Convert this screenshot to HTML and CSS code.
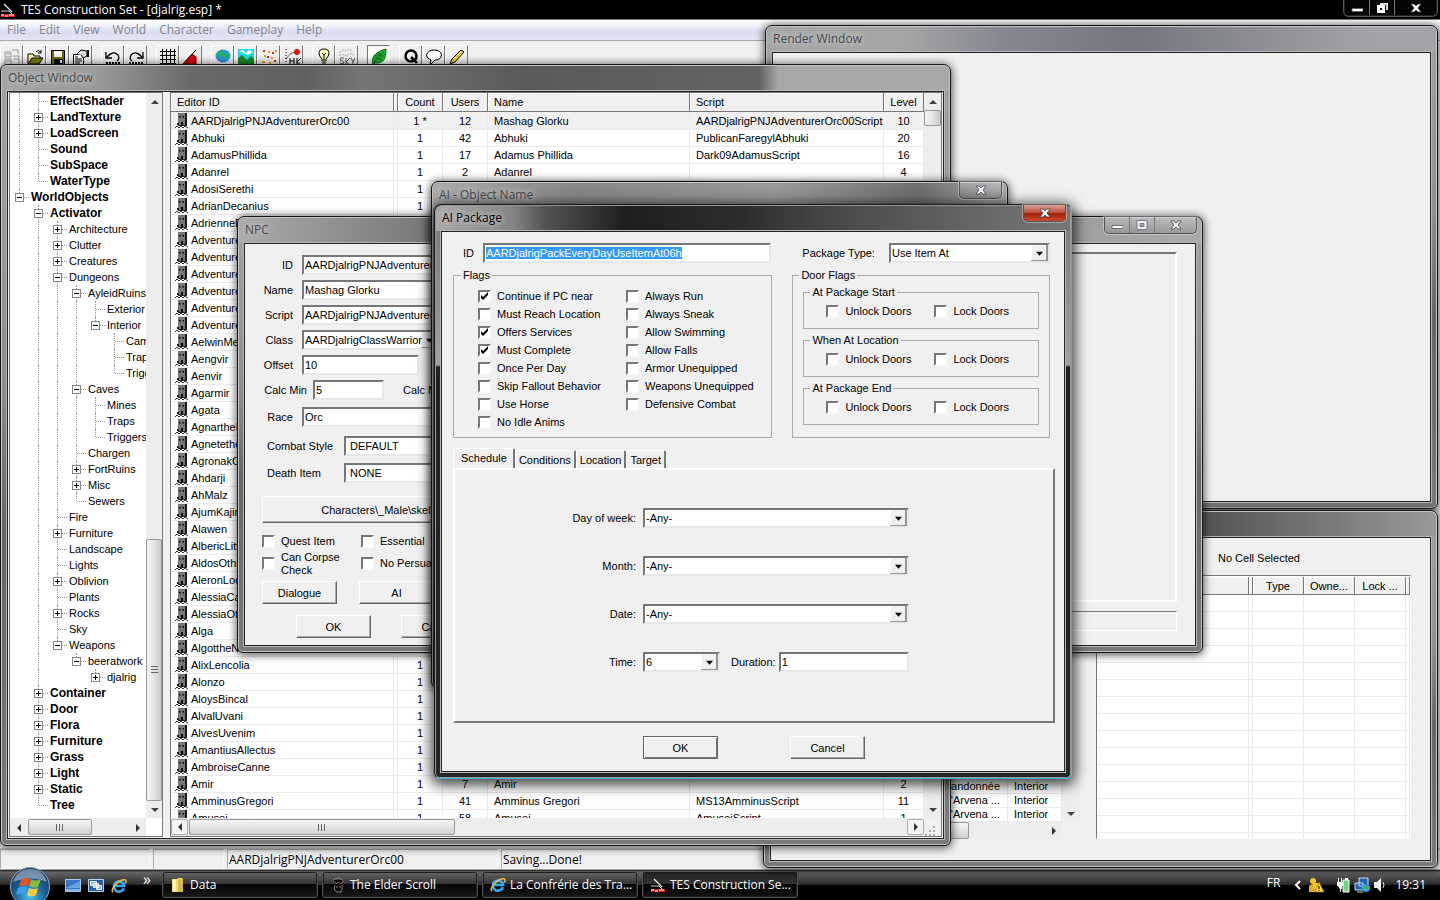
FILE: index.html
```html
<!DOCTYPE html>
<html lang="en">
<head>
<meta charset="utf-8">
<title>TES Construction Set</title>
<link rel="stylesheet" href="styles.css">
</head>
<body>
<svg class="defs" aria-hidden="true">
  <symbol id="npc" viewBox="0 0 14 16"><path d="M3 0h8v12H3z" fill="#767676"/><path d="M10 0h2v13h-2zM2 10h2v2H2z" fill="#1c1c1c"/><path d="M4 3h1.500v1.500H4zM7.500 3H9v1.500H7.500zM6 9h2v3H6z" fill="#000"/><path d="M3 12h9v1H3z" fill="#222"/><path d="M0 15l2-2 2 2 2-2 2 2 2-2 3 2" fill="none" stroke="#333"/></symbol>
  <symbol id="compass" viewBox="0 0 16 16"><path d="M1 9h8l5 5" fill="none" stroke="#ccc"/><path d="M4 2l8 8" stroke="#ddd" stroke-width="1.4"/><path d="M1 12h14v3H1z" fill="#d22"/><path d="M1 13h3M5 14h3M9 13h5" stroke="#fff"/></symbol>
  <symbol id="ie" viewBox="0 0 18 18"><path d="M14.500 11.500A5.800 5.800 0 1 1 14.800 9H5" fill="none" stroke="#38a5ee" stroke-width="3"/><path d="M2 16C-1 12 9 2 15 2c3 0 2 3 1 4" fill="none" stroke="#f5c234" stroke-width="1.6"/></symbol>
  <symbol id="x" viewBox="0 0 12 10"><path d="M1 1h3l2 2 2-2h3L8 5l3 4H8L6 7 4 9H1l3-4z" fill="#fff" stroke="#445" stroke-width=".8"/></symbol>
  <symbol id="min" viewBox="0 0 12 10"><path d="M1 5.500h11v3H1z" fill="#fff" stroke="#556" stroke-width=".8"/></symbol>
  <symbol id="max" viewBox="0 0 12 10"><path d="M1 .5h10v9H1zM4 3.500h4v3H4z" fill="#eee" fill-rule="evenodd" stroke="#667" stroke-width=".8"/></symbol>
  <symbol id="restore" viewBox="0 0 12 10"><path d="M4 0h8v7h-2V2H4z" fill="#ddd"/><path d="M1 2h8v8H1zM4 5v2h2V5z" fill="#fff" fill-rule="evenodd"/></symbol>
</svg>
<main class="app">
  <header class="app-title">
    <svg class="i16"><use href="#compass"/></svg><h1>TES Construction Set - [djalrig.esp] *</h1>
    <div class="caption dark"><button aria-label="Minimize"><svg><use href="#min"/></svg></button><button aria-label="Restore"><svg><use href="#restore"/></svg></button><button class="close" aria-label="Close"><svg><use href="#x"/></svg></button></div>
  </header>
  <nav class="menu"><button>File</button><button>Edit</button><button>View</button><button>World</button><button>Character</button><button>Gameplay</button><button>Help</button></nav>
  <div class="toolbar">
    <div class="group">
      <button aria-label="Version control"><svg viewBox="0 0 18 18"><path d="M2 4h6v5H2zM9 2h6v4M2 11h6v6H2zM10 8h6v8M3 6h4M3 13h4M11 11h4" fill="none" stroke="#999"/></svg></button>
      <button aria-label="Open"><svg viewBox="0 0 18 18"><path d="M2 16V6h5l1 2h6v2" fill="#ffffa0" stroke="#000"/><path d="M2 16l4-6h11l-4 6z" fill="#808000" stroke="#000"/><path d="M10 4q3-3 5 1M15 2v3h-3" fill="none" stroke="#000"/></svg></button>
      <button aria-label="Save"><svg viewBox="0 0 18 18"><path d="M2.500 2.500h13v14h-13z" fill="#707000" stroke="#000"/><path d="M5 3h8v6H5z" fill="#f0f0f0"/><path d="M5 11h9v5H5z" fill="#000"/><path d="M11 12h2v3h-2z" fill="#fff"/></svg></button>
      <button aria-label="Preferences"><svg viewBox="0 0 18 18"><path d="M1.500 6.500h10v10h-10z" fill="#fff" stroke="#000"/><path d="M3 9h3M3 11h7M3 13h7M3 15h5" stroke="#000"/><path d="M5 6l4-4 6 1v5l-4 2-2-3" fill="#ddd" stroke="#000"/><path d="M15 2h2v7h-2z"/></svg></button>
    </div>
    <div class="group">
      <button aria-label="Undo"><svg viewBox="0 0 18 18"><path d="M2 4v6h6M3 9q6-7 11-2 2 4-1 6" fill="none" stroke="#000" stroke-width="1.300"/><path d="M2 15h14" stroke="#000" stroke-width="2" stroke-dasharray="2 1"/></svg></button>
      <button aria-label="Redo"><svg viewBox="0 0 18 18"><path d="M16 4v6h-6M15 9Q9 2 4 7q-2 4 1 6" fill="none" stroke="#000" stroke-width="1.300"/><path d="M2 15h14" stroke="#000" stroke-width="2" stroke-dasharray="2 1"/></svg></button>
    </div>
    <div class="group">
      <button aria-label="Snap to grid"><svg viewBox="0 0 18 18"><path d="M3.500 1v16M7.500 1v16M11.500 1v16M15.500 1v16M1 3.500h16M1 7.500h16M1 11.500h16M1 15.500h16" stroke="#000"/></svg></button>
      <button aria-label="Snap to angle"><svg viewBox="0 0 18 18"><path d="M1 16L14 2" stroke="#000"/><path d="M1 16h13V9l-4-3z" fill="#e00000" stroke="#500"/></svg></button>
    </div>
    <div class="group">
      <button aria-label="World"><svg viewBox="0 0 18 18"><ellipse cx="9" cy="8" rx="7.500" ry="6.500" fill="#2794e8"/><path d="M3 6q3-5 6-3l-1 4-3 3zM10 6l4-2 1 5-4 4z" fill="#22b84c"/></svg></button>
      <button aria-label="Landscape"><svg viewBox="0 0 18 18"><path d="M1 1h16v16H1z" fill="#20d7e8"/><path d="M2 3l4-1 3 3 3-3 4 2-5 3z" fill="#fff"/><path d="M1 10l4-3 5 5 4-4 3 3v6H1z" fill="#168a24"/></svg></button>
      <button aria-label="Path grid"><svg viewBox="0 0 18 18"><path d="M3 2h2v2H3zM12 4h2v2h-2zM7 8h2v2H7zM14 12h2v2h-2z" fill="#e02020"/><path d="M8 3h2v2H8zM4 7h2v2H4zM11 9h2v2h-2zM2 13h3v2H2zM9 14h2v2H9zM15 2h2v2h-2z" fill="#e8a010"/></svg></button>
      <button aria-label="Havok"><svg viewBox="0 0 18 18"><path d="M3 1v15" stroke="#000" stroke-dasharray="1 2"/><path d="M3 11q4-6 9-7" fill="none" stroke="#000" stroke-dasharray="2 1"/><circle cx="14" cy="4" r="3" fill="#e01010"/><path d="M7 10v7M11 10v7M7 13h4M14 10v7M18 10l-4 4 4 3" fill="none" stroke="#000"/></svg></button>
    </div>
    <div class="group">
      <button aria-label="Light"><svg viewBox="0 0 18 18"><path d="M9 1q5 0 5 4 0 3-3 6v2H7v-2Q4 8 4 5q0-4 5-4z" fill="#ffffa8" stroke="#000"/><path d="M7 5l2 2 2-2M9 7v5M7 15h4M8 17h2" fill="none" stroke="#000"/></svg></button>
      <button aria-label="Sky"><svg viewBox="0 0 18 18"><path d="M2 5q3-5 6-2 4-3 6 1M1 8q4-3 7 0 4-4 8-1" fill="none" stroke="#999" stroke-dasharray="2 1"/><path d="M6 10q-4-1-4 2 4 1 4 3-2 2-4 0M8 10v7M12 10l-4 4 4 3M13 10l2 4 2-4M15 14v3" fill="none" stroke="#555"/></svg></button>
    </div>
    <div class="group">
      <button class="pressed" aria-label="Leaves"><svg viewBox="0 0 18 18"><path d="M3 16C0 7 9 3 16 1c0 9-2 15-11 14z" fill="#20b030" stroke="#087018"/><path d="M2 17Q7 9 14 4M6 11V7M9 8V5M7 11h5M10 8h4" fill="none" stroke="#086018"/></svg></button>
    </div>
    <div class="group">
      <button aria-label="Quest"><svg viewBox="0 0 18 18"><circle cx="9" cy="8" r="5.500" fill="none" stroke="#000" stroke-width="2.500"/><path d="M9 9l6 6" stroke="#000" stroke-width="2.500"/></svg></button>
      <button aria-label="Dialogue"><svg viewBox="0 0 18 18"><path d="M6 12Q1 10 1.500 7 3 2 9 2q7 0 7.500 5Q16 12 10 12l-5 5z" fill="#fff" stroke="#000"/></svg></button>
      <button aria-label="Edit script"><svg viewBox="0 0 18 18"><path d="M2 16l2-5 9-9 3 2-9 10z" fill="#f0d030" stroke="#000"/></svg></button>
    </div>
  </div>
  <div class="workspace"></div>
  <footer class="status"><span></span><span></span><span>AARDjalrigPNJAdventurerOrc00</span><span>Saving...Done!</span></footer>
  <nav class="taskbar">
    <button class="start" aria-label="Start"><svg viewBox="0 0 42 34"><defs><radialGradient id="orb" cx=".5" cy=".75" r=".8"><stop offset="0" stop-color="#45c3ee"/><stop offset=".5" stop-color="#1a5d96"/><stop offset="1" stop-color="#102e50"/></radialGradient></defs><circle cx="21" cy="21" r="19.500" fill="url(#orb)" stroke="#8eaabb"/><path d="M4 16Q8 3 21 3q13 0 17 13Q22 9 4 16" fill="#fff" opacity=".4"/><path d="M12 14q4-4 9-1l-2 7q-4-2-9 1z" fill="#ec5322"/><path d="M22 13q5 3 10 0l-3 8q-4 2-9-1z" fill="#84bf3b"/><path d="M9 22q5-3 9-1l-2 8q-4-3-9 0z" fill="#36a1e4"/><path d="M20 22q5 2 9 0l-2 7q-5 3-9 0z" fill="#fccb33"/></svg></button>
    <div class="quick">
      <button aria-label="Show desktop"><svg class="i16" viewBox="0 0 16 16"><path d="M.5 1.500h15v12H.5z" fill="#3978c8" stroke="#a8c8ec"/><path d="M1 10L15 3v7z" fill="#6aa4e0"/><path d="M1 12h14" stroke="#d7eaff"/></svg></button>
      <button aria-label="Switch windows"><svg class="i16" viewBox="0 0 16 16"><path d="M.5 1.500h15v12H.5z" fill="#235fae" stroke="#b3d2f0"/><path d="M2.500 3.500h6v4h-6zM5.500 5.500h5v4h-5zM8.500 7.500h5v4h-5z" fill="#8cbce8" stroke="#fff"/></svg></button>
      <button aria-label="Internet Explorer"><svg class="i16"><use href="#ie"/></svg></button>
    </div>
    <span class="more">»</span>
    <div class="tasks">
      <button><svg class="i16" viewBox="0 0 16 16"><path d="M2 2h5l1-1h5v14H2z" fill="#f2da7b"/><path d="M8 3l5-2v14H8z" fill="#d8b74b"/><path d="M3 3h3v11H3z" fill="#fff3b8"/></svg>Data</button>
      <button><svg class="i16" viewBox="0 0 16 16"><path d="M4 3h8v4H4z" fill="#000"/><path d="M3 3q5-4 10 0M4 4l2 3 2-2 3 2 2-3M5 8q-2 5 2 7h4q2-3 1-7M7 9v2M10 9v2" fill="none" stroke="#b09090" stroke-width=".8"/></svg>The Elder Scroll</button>
      <button><svg class="i16"><use href="#ie"/></svg>La Confrérie des Tra...</button>
      <button class="active"><svg class="i16"><use href="#compass"/></svg>TES Construction Se...</button>
    </div>
    <div class="tray">
      <span class="lang">FR</span>
      <svg class="chev" viewBox="0 0 8 10"><path d="M6 1L2 5l4 4" fill="none" stroke="#fff" stroke-width="2"/></svg>
      <svg class="i16" viewBox="0 0 16 16"><circle cx="5" cy="4" r="3" fill="#f6c528"/><path d="M1 15V9q4-4 8 0v6z" fill="#e9aa12"/><path d="M5 6h5v6H5z" fill="#f6c528"/><path d="M11 5l5 10H7z" fill="#ffd94c" stroke="#9b6a00" stroke-width=".6"/><path d="M11 9v3M11 13v1" stroke="#000"/></svg>
      <svg class="i16 power" viewBox="0 0 16 16"><path d="M7 3h6v12H7z" fill="#68d978" stroke="#fff"/><path d="M9 1h3v2H9zM1 5h6v4H6v3H5v3H4v-3L2 9H1zM2 1h1v4H2zM5 1h1v4H5z" fill="#fff"/></svg>
      <svg class="i16" viewBox="0 0 16 16"><path d="M5 1h9v8H5zM1 6h8v7H1z" fill="#1d65b7" stroke="#cbe5ff"/><path d="M3 15h6" stroke="#ccc"/><circle cx="12" cy="11" r="4" fill="#249cdf"/><path d="M9 10l3-2 1 4-2 2zM14 9l2 2-1 2z" fill="#3cc44c"/></svg>
      <svg class="i16" viewBox="0 0 16 16"><path d="M2 5h3l4-4v14l-4-4H2z" fill="#f0f0f0"/><path d="M11 5q2 3 0 6" fill="none" stroke="#ddd"/></svg>
      <time>19:31</time>
    </div>
  </nav>

  <section class="window render"><div class="bar"><h2>Render Window</h2></div><div class="client"></div></section>

  <section class="window cell"><div class="bar"></div>
    <div class="client">
      <div class="cells">
        <table class="grid"><colgroup><col><col class="c-type"></colgroup><tbody><tr><td>Cabane abandonnée</td><td>Interior</td></tr><tr><td>Maison d'Arvena ...</td><td>Interior</td></tr><tr><td>Cave d'Arvena ...</td><td>Interior</td></tr></tbody></table>
        <div class="vscroll"><i class="arrow up"></i><i class="track"></i><i class="arrow down"></i></div>
        <div class="hscroll"><i class="arrow left"></i><i class="thumb"></i><i class="track"></i><i class="arrow right"></i></div>
      </div>
      <div class="refs"><p>No Cell Selected</p><div class="sunk"><table class="grid" id="refs"><colgroup><col><col class="c-gap"><col class="c-ref"><col class="c-ref"><col class="c-ref"><col class="c-gap"></colgroup><thead><tr><th></th><th></th><th>Type</th><th>Owne...</th><th>Lock ...</th><th></th></tr></thead><tbody></tbody></table></div></div>
    </div>
  </section>

  <section class="window object"><div class="bar"><h2>Object Window</h2></div>
    <div class="client">
      <div class="treepane"><div class="tree" id="tree"></div>
        <div class="vscroll"><i class="arrow up"></i><i class="track"></i><i class="thumb"></i><i class="arrow down"></i></div>
        <div class="hscroll"><i class="arrow left"></i><i class="thumb"></i><i class="track"></i><i class="arrow right"></i></div>
      </div>
      <div class="listpane"><div class="list"><table class="grid" id="npcs"><colgroup><col class="c-id"><col class="c-gap"><col class="c-num"><col class="c-num"><col class="c-name"><col><col class="c-level"></colgroup><thead><tr><th>Editor ID</th><th></th><th>Count</th><th>Users</th><th>Name</th><th>Script</th><th>Level</th></tr></thead><tbody></tbody></table></div>
        <div class="vscroll"><i class="arrow up"></i><i class="thumb"></i><i class="track"></i><i class="arrow down"></i></div>
        <div class="hscroll"><i class="arrow left boxed"></i><i class="thumb"></i><i class="track"></i><i class="arrow right boxed"></i></div>
        <svg class="grip" viewBox="0 0 12 12"><path d="M10 2v2M10 6v2M10 10v2M6 6v2M6 10v2M2 10v2" stroke="#aaa" stroke-width="2"/></svg>
      </div>
    </div>
  </section>

  <section class="window npc"><div class="bar"><h2>NPC</h2><div class="caption"><button aria-label="Minimize"><svg><use href="#min"/></svg></button><button aria-label="Maximize"><svg><use href="#max"/></svg></button><button class="close" aria-label="Close"><svg><use href="#x"/></svg></button></div></div>
    <div class="client">
      <form class="npcform">
        <div class="row"><label for="n1">ID</label><input id="n1" value="AARDjalrigPNJAdventurerOrc00"></div>
        <div class="row"><label for="n2">Name</label><input id="n2" value="Mashag Glorku"></div>
        <div class="row"><label for="n3">Script</label><input id="n3" value="AARDjalrigPNJAdventurerOrc00Script"></div>
        <div class="row"><label for="n4">Class</label><select id="n4" class="class"><option>AARDjalrigClassWarrior</option></select></div>
        <div class="row"><label for="n5">Offset</label><input id="n5" class="offset" value="10"></div>
        <div class="row calc"><label for="n6">Calc Min</label><input id="n6" value="5"><label for="n7">Calc Max</label><input id="n7" value="0"></div>
        <div class="row race"><label for="n8">Race</label><select id="n8"><option>Orc</option></select></div>
        <div class="row wide"><label for="n9">Combat Style</label><select id="n9"><option>DEFAULT</option></select></div>
        <div class="row wide"><label for="n10">Death Item</label><select id="n10"><option>NONE</option></select></div>
        <button type="button" class="btn skeleton">Characters\_Male\skeleton.nif</button>
        <div class="checks"><label><input type="checkbox">Quest Item</label><label><input type="checkbox">Essential</label><label class="two"><input type="checkbox">Can Corpse Check</label><label><input type="checkbox">No Persuasion</label></div>
        <div class="btns"><button type="button" class="btn">Dialogue</button><button type="button" class="btn">AI</button></div>
        <div class="btns end"><button type="button" class="btn">OK</button><button type="button" class="btn">Cancel</button></div>
      </form>
      <div class="preview"><div class="panel"></div><div class="strip"></div></div>
    </div>
  </section>

  <section class="window ai"><div class="bar"><h2>AI - Object Name</h2><div class="caption"><button class="close" aria-label="Close"><svg><use href="#x"/></svg></button></div></div><div class="client"></div></section>

  <section class="window package"><div class="bar"><h2>AI Package</h2><div class="caption red"><button class="close" aria-label="Close"><svg><use href="#x"/></svg></button></div></div>
    <form class="client">
      <div class="pair head">
        <div class="field"><label for="pid">ID</label><input id="pid" value="AARDjalrigPackEveryDayUseItemAt06h"></div>
        <div class="field type"><label for="ptype">Package Type:</label><select id="ptype"><option>Use Item At</option></select></div>
      </div>
      <div class="pair">
        <fieldset class="flags"><legend>Flags</legend>
          <label><input type="checkbox" checked>Continue if PC near</label><label><input type="checkbox">Must Reach Location</label><label><input type="checkbox" checked>Offers Services</label><label><input type="checkbox" checked>Must Complete</label><label><input type="checkbox">Once Per Day</label><label><input type="checkbox">Skip Fallout Behavior</label><label><input type="checkbox">Use Horse</label><label><input type="checkbox">No Idle Anims</label>
          <label><input type="checkbox">Always Run</label><label><input type="checkbox">Always Sneak</label><label><input type="checkbox">Allow Swimming</label><label><input type="checkbox">Allow Falls</label><label><input type="checkbox">Armor Unequipped</label><label><input type="checkbox">Weapons Unequipped</label><label><input type="checkbox">Defensive Combat</label>
        </fieldset>
        <fieldset class="doors"><legend>Door Flags</legend>
          <fieldset><legend>At Package Start</legend><label><input type="checkbox">Unlock Doors</label><label><input type="checkbox">Lock Doors</label></fieldset>
          <fieldset><legend>When At Location</legend><label><input type="checkbox">Unlock Doors</label><label><input type="checkbox">Lock Doors</label></fieldset>
          <fieldset><legend>At Package End</legend><label><input type="checkbox">Unlock Doors</label><label><input type="checkbox">Lock Doors</label></fieldset>
        </fieldset>
      </div>
      <div class="tabs" role="tablist"><button type="button" role="tab" aria-selected="true">Schedule</button><button type="button" role="tab">Conditions</button><button type="button" role="tab">Location</button><button type="button" role="tab">Target</button></div>
      <div class="tabpanel">
        <div class="sched"><label for="s1">Day of week:</label><select id="s1"><option>-Any-</option></select></div>
        <div class="sched"><label for="s2">Month:</label><select id="s2"><option>-Any-</option></select></div>
        <div class="sched"><label for="s3">Date:</label><select id="s3"><option>-Any-</option></select></div>
        <div class="sched"><label for="s4">Time:</label><span class="time"><select id="s4"><option>6</option></select><label for="s5">Duration:</label><input id="s5" value="1"></span></div>
      </div>
      <div class="actions"><button type="button" class="btn default">OK</button><button type="button" class="btn">Cancel</button></div>
    </form>
  </section>
</main>
<script src="app.js"></script>
</body>
</html>
```
FILE: styles.css
```css
* { box-sizing: border-box; }
body { margin: 0; font: 11px/14px "Liberation Sans", Arial, sans-serif; color: #000; }
button, input, select { font: inherit; color: inherit; margin: 0; }
button { padding: 0; border: 0; background: none; }
h1, h2, p { margin: 0; font-weight: normal; }
.defs { position: absolute; width: 0; height: 0; }
.i16 { width: 16px; height: 16px; flex: none; }

.app { position: relative; display: flex; flex-direction: column; height: 100vh; overflow: hidden; background: #f0f0f0; }
.app-title, .menu, .status, .taskbar, .bar { font-family: "Open Sans", "Noto Sans", sans-serif; font-size: 12px; }
.app-title { display: flex; align-items: center; gap: 5px; height: 20px; flex: none; background: #000; color: #fff; border-bottom: 1px solid #777; }
.app-title h1 { font-size: 12px; flex: 1; }

.caption { display: flex; align-self: flex-start; height: 17px; border: 1px solid #555; border-top: 0; border-radius: 0 0 5px 5px; box-shadow: 0 0 0 1px rgba(255,255,255,.35); overflow: hidden; }
.caption button { display: grid; place-items: center; width: 25px; border-right: 1px solid #777; background: linear-gradient(rgba(255,255,255,.25), rgba(0,0,0,.08)); }
.caption button.close { width: 41px; border-right: 0; }
.caption svg { width: 12px; height: 10px; }
.caption.dark { margin-right: 3px; height: 16px; border-color: #222; }
.caption.dark button { background: #050505; }
.caption.red button { background: linear-gradient(#dca195, #bb4a36 50%, #9c1c07 50%, #cf4b2a); }

.menu { display: flex; gap: 13px; align-items: center; flex: none; height: 21px; padding-left: 7px; background: linear-gradient(#fff, #eceefb 35%, #dadcf0 60%, #e4e6f6); border-bottom: 1px solid #aaa; color: #85858d; }
.toolbar { display: flex; flex: none; gap: 9px; height: 30px; padding-top: 4px; }
.group { display: flex; }
.toolbar button { width: 23px; height: 24px; display: grid; place-items: center; border: 1px solid; border-color: #fff #777 #777 #fff; }
.toolbar button.pressed { border-color: #777 #fff #fff #777; background: #fafafa; }
.toolbar svg { width: 18px; height: 18px; }
.workspace { flex: 1; background: #f0f0f0; }
.status { display: flex; flex: none; gap: 3px; height: 21px; line-height: 19px; border-top: 1px solid #ccc; }
.status span { border: 1px solid; border-color: #aaa #f8f8f8 #f8f8f8 #aaa; padding-left: 1px; white-space: nowrap; }
.status span:nth-child(1) { width: 150px; }
.status span:nth-child(2) { width: 71px; }
.status span:nth-child(3) { width: 271px; }
.status span:nth-child(4) { flex: 1; }

.taskbar { display: flex; flex: none; align-items: center; height: 31px; color: #fff; background: linear-gradient(#999 0 1px, #333 1px 2px, #666 3px, #2a2a2a 50%, #000 52%); }
.start { width: 42px; height: 34px; margin-left: 9px; align-self: flex-end; z-index: 1; }
.start svg { display: block; width: 42px; height: 34px; }
.quick { display: flex; gap: 7px; margin-left: 14px; padding-top: 2px; }
.quick button, .quick svg { display: block; }
.more { width: 19px; margin-left: 16px; font-size: 16px; padding-bottom: 12px; }
.tasks { display: flex; gap: 4px; flex: 1; }
.tasks button { display: flex; align-items: center; gap: 4px; width: 156px; height: 27px; padding-left: 7px; border: 1px solid #555; border-radius: 3px; box-shadow: inset 0 0 0 1px #1d1d1d; background: linear-gradient(#666, #333 48%, #050505 50%, #181818); white-space: nowrap; }
.tasks button.active { background: linear-gradient(#222, #333 48%, #050505 50%, #111); }
.tray { display: flex; align-items: center; gap: 2px; padding-right: 14px; }
.tray .lang { margin-right: 12px; padding-bottom: 4px; }
.tray .chev { width: 8px; height: 10px; margin-right: 4px; }
.tray .power { margin-left: 10px; }
.tray time { margin-left: 5px; }

.window { position: absolute; display: flex; flex-direction: column; padding: 0 6px 6px; border: 1px solid #161616; border-radius: 7px 7px 6px 6px; box-shadow: inset 0 0 0 1px #c4c4c4, 0 1px 9px 1px rgba(0,0,0,.65); background: linear-gradient(#a2a2a2, #8e8e8e 40%, #666 60%, #7a7a7a); }
.bar { display: flex; flex: none; justify-content: space-between; height: 25px; margin: 1px -5px 0; padding: 0 4px 0 6px; border-radius: 6px 6px 0 0; color: #45484c; }
.bar h2 { font-size: 12px; line-height: 23px; text-shadow: 0 0 6px #ccc, 0 0 6px #ccc; }
.bar .caption { margin-top: -1px; }
.client { flex: 1; min-height: 0; background: #f0f0f0; border: 1px solid #222; outline: 1px solid #b8b8b8; }

.render { left: 765px; right: 2px; top: 25px; height: 484px; }
.render .bar { background: linear-gradient(90deg, #a6a6a6 20%, #858890 35%, #74777e 55%, #a2a3a6 90%); }
.cell { left: 763px; right: 2px; top: 510px; height: 358px; }
.cell .bar { background: linear-gradient(90deg, #777 50%, #555 66%, #999); }
.object { left: 0; top: 64px; width: 951px; height: 782px; }
.object .bar { background: linear-gradient(90deg, #a4a4a4, #9a9a9a 10%, #696969 20%, #606060 32%, #757575 38%, #5a5a5a 55%, #636363 80%, #a8a8a8 82%); }
.npc { left: 237px; top: 216px; width: 966px; height: 437px; }
.npc .bar { background: linear-gradient(90deg, #aaa, #777 20%, #999 80%, #aaa); }
.ai { left: 431px; top: 181px; width: 577px; height: 507px; background: linear-gradient(#999, #666 60%, #222); }
.ai .bar { background: linear-gradient(90deg, #aaa, #868686 25%, #999 60%, #6e6e6e 85%, #a8a8a8); }
.package { left: 434px; top: 204px; width: 638px; height: 575px; border-right-color: #3eb4d6; border-bottom-color: #3eb4d6; box-shadow: inset 0 0 0 1px #999, 0 3px 14px 3px rgba(0,0,0,.75); background: linear-gradient(#777 0, #a0a0a0 160px, #222 162px, #252525); }
.package .bar { color: #000; background: linear-gradient(90deg, #aaa, #858585 12%, #555 17%, #1e1e1e 30%, #2c2c2c 48%, #444 60%, #666 85%, #777); }

/* scroll bars */
.vscroll, .hscroll { display: flex; background: #ededed; }
.vscroll { flex-direction: column; }
.arrow { display: grid; place-items: center; width: 17px; height: 17px; flex: none; }
.arrow::before { content: ""; border: 4px solid transparent; }
.up::before { border-top: 0; border-bottom-color: #444; }
.down::before { border-bottom: 0; border-top-color: #444; }
.left::before { border-left: 0; border-right-color: #333; }
.right::before { border-right: 0; border-left-color: #333; }
.boxed { border: 1px solid #aaa; border-radius: 2px; height: 16px; background: #f4f4f4; }
.track { flex: 1; }
.thumb { position: relative; display: grid; place-items: center; border: 1px solid #999; border-radius: 2px; background: linear-gradient(#f5f5f5, #e6e6e6 45%, #d0d0d0); }
.vscroll .thumb { background: linear-gradient(90deg, #f5f5f5, #e6e6e6 45%, #c9c9cf); }
.hscroll .thumb::before { content: ""; width: 8px; height: 7px; background: repeating-linear-gradient(90deg, #666 0 1px, transparent 1px 3px); }

/* tables */
.grid { border-collapse: separate; border-spacing: 0; table-layout: fixed; width: 100%; background: #fff; }
.grid th { height: 18px; padding: 0 6px; font-weight: normal; text-align: center; background: #f0f0f0; border-right: 1px solid #777; border-bottom: 1px solid #777; box-shadow: inset 1px 1px #fff; white-space: nowrap; overflow: hidden; }
.grid td { height: 17px; padding: 0 0 0 6px; border-right: 1px solid #ebebeb; border-bottom: 1px solid #ebebeb; white-space: nowrap; overflow: hidden; line-height: 16px; }
.c-gap { width: 4px; }
.grid .gap { padding: 0; }

/* object window */
.object .client { display: flex; gap: 7px; padding: 0 1px 1px; }
.treepane { display: grid; grid-template: minmax(0, 1fr) 18px / minmax(0, 1fr) 16px; width: 154px; border: 1px solid #777; background: #fff; }
.treepane > .vscroll { grid-row: 1; grid-column: 2; }
.treepane .vscroll .thumb { height: 262px; }
.treepane .vscroll .thumb::before { content: ""; width: 7px; height: 8px; background: repeating-linear-gradient(#666 0 1px, transparent 1px 3px); }
.treepane .hscroll, .listpane .hscroll { padding: 1px 0; }
.treepane .hscroll .thumb { width: 64px; }
.treepane .hscroll .left { margin-right: 1px; }
.tree { overflow: hidden; }
.node { display: flex; height: 16px; line-height: 16px; white-space: nowrap; }
.node b { font-size: 12px; }
.node > :last-child { padding-left: 2px; }
.node i { position: relative; flex: none; width: 19px; }
.node i.v::before { content: ""; position: absolute; left: 9px; top: 0; bottom: 0; border-left: 1px dotted #999; }
.node i.end::before { content: ""; position: absolute; left: 9px; top: 0; height: 8px; border-left: 1px dotted #999; }
.node i.h::after { content: ""; position: absolute; left: 10px; right: 0; top: 8px; border-top: 1px dotted #999; }
.node .box { position: absolute; z-index: 1; left: 5px; top: 4px; width: 9px; height: 9px; border: 1px solid #888; background: linear-gradient(#000, #000) center / 5px 1px no-repeat #fff; }
.node .plus { background: linear-gradient(#000, #000) center / 5px 1px no-repeat, linear-gradient(#000, #000) center / 1px 5px no-repeat #fff; }
.listpane { flex: 1; min-width: 0; display: grid; grid-template: minmax(0, 1fr) 18px / minmax(0, 1fr) 17px; border: 1px solid #777; }
.list { overflow: hidden; background: #fff; }
.listpane .vscroll .thumb { height: 16px; }
.listpane .hscroll .thumb { width: 266px; margin-left: 1px; }
.grip { width: 12px; height: 12px; align-self: end; }
.c-id { width: 223px; }
.c-num { width: 45px; }
.c-name { width: 202px; }
.c-level { width: 40px; }
#npcs th { height: 19px; }
#npcs th:nth-child(1), #npcs th:nth-child(5), #npcs th:nth-child(6) { text-align: left; }
#npcs td:nth-child(3), #npcs td:nth-child(4), #npcs td:nth-child(7) { text-align: center; padding: 0; }
#npcs tr:first-child td { background: #f0f0f0; }
#npcs tbody tr:first-child td { height: 18px; }
#npcs td:first-child { padding-left: 4px; }
#npcs td svg { width: 14px; height: 16px; margin-right: 2px; vertical-align: top; }

/* cell view */
.cell .client { display: flex; gap: 16px; padding: 4px 19px 21px 10px; }
.cells { display: grid; grid-template: minmax(0, 1fr) 17px / minmax(0, 1fr) 18px; width: 299px; align-items: end; }
.cells .vscroll { align-self: stretch; }
.cells .grid td { height: 14px; line-height: 13px; }
.cells td:first-child { text-align: right; padding-right: 7px; }
.c-type { width: 54px; }
.cells .hscroll .thumb { width: 171px; }
.refs { flex: 1; display: flex; flex-direction: column; }
.refs p { padding: 9px 0 10px 122px; }
.sunk { flex: 1; overflow: hidden; border: 1px solid; border-color: #777 #fff #fff #777; background: #fff; padding-top: 1px; }
.c-ref { width: 51px; }
#refs th { padding: 0; }

/* form controls */
input:not([type=checkbox]), select { height: 20px; min-width: 0; padding: 0 1px; background: #fff; border: 2px solid; border-color: #777 #e8e8e8 #e8e8e8 #777; border-radius: 0; outline: 0; }
select { appearance: none; background: #fff url("data:image/svg+xml,%3Csvg xmlns='http://www.w3.org/2000/svg' width='17' height='17'%3E%3Cpath d='M0 0h17v17H0z' fill='%23f0f0f0'/%3E%3Cpath d='M.5 16V.5H16' fill='none' stroke='%23fff'/%3E%3Cpath d='M0 16h16V0' fill='none' stroke='%23777' stroke-width='1.500'/%3E%3Cpath d='M5 7h7l-3.500 4z'/%3E%3C/svg%3E") right center no-repeat; }
input[type=checkbox] { appearance: none; flex: none; width: 13px; height: 13px; border: 2px solid; border-color: #777 #fafafa #fafafa #777; background: #fff; }
input[type=checkbox]:checked { background: #fff url("data:image/svg+xml,%3Csvg xmlns='http://www.w3.org/2000/svg' width='9' height='9'%3E%3Cpath d='M1 3v3l2 2 5-5V0L3 5z'/%3E%3C/svg%3E") center no-repeat; }
::selection { background: #3399ff; color: #fff; }
.btn { height: 23px; width: 75px; border: 1px solid; border-color: #fff #666 #666 #fff; box-shadow: inset -1px -1px #aaa; background: #f0f0f0; }
.btn.default { border-color: #666; box-shadow: inset 1px 1px #fff, inset -1px -1px #777; }

/* NPC window */
.npc .client { display: flex; }
.npcform { width: 400px; padding: 8px 14px 0 17px; }
.row { display: flex; align-items: center; gap: 9px; height: 25px; }
.row label { width: 31px; text-align: right; }
.row input, .row select { flex: 1; }
.row .class { flex: none; width: 138px; }
.row .offset { flex: none; width: 117px; }
.calc { gap: 6px; }
.calc label { width: 45px; flex: none; white-space: nowrap; }
.calc input { flex: none; width: 71px; }
.calc input + label { margin-left: 13px; }
.race { height: 30px; }
.wide { height: 27px; gap: 11px; }
.wide label { width: 66px; padding-left: 5px; text-align: left; white-space: nowrap; flex: none; margin-right: 5px; }
.wide select { padding-left: 4px; }
.skeleton { display: block; width: 264px; height: 27px; margin-top: 10px; white-space: nowrap; }
.checks { display: grid; grid-template-columns: 99px 1fr; grid-template-rows: 20px 25px; align-items: center; margin-top: 8px; }
.checks label { display: flex; align-items: center; gap: 6px; line-height: 13px; }
.checks .two { width: 84px; }
.btns { display: flex; gap: 22px; margin-top: 5px; }
.btns.end { gap: 30px; margin: 11px 0 0 34px; }
.preview { flex: 1; display: flex; flex-direction: column; gap: 9px; padding: 8px 18px 14px 0; }
.panel { flex: 1; border: 2px solid; border-color: #777 #fff #fff #777; }
.strip { height: 20px; border: 1px solid; border-color: #777 #fff #fff #777; }

/* AI package dialog */
.package .client { display: flex; flex-direction: column; padding: 11px 9px 12px 11px; }
.pair { display: flex; gap: 20px; padding-right: 5px; }
.pair > :first-child { flex: 320; }
.pair > :last-child { flex: 257; }
.field { display: flex; align-items: center; gap: 9px; min-width: 0; }
.field > :last-child { flex: 1; }
.field:first-child { padding-left: 10px; }
.field.type { padding-left: 11px; gap: 14px; white-space: nowrap; }
.head { margin-bottom: 5px; }
fieldset { min-width: 0; margin: 0; padding: 0; border: 1px solid #aaa; box-shadow: none; }
legend { padding: 0 2px; }
fieldset label { display: flex; align-items: center; gap: 6px; }
.flags { display: grid; grid-template: repeat(8, 18px) / 148px 1fr; grid-auto-flow: column; padding: 5px 0 6px 24px; }
.flags > legend { margin-left: -17px; }
.doors { display: flex; flex-direction: column; gap: 4px; padding: 3px 10px 9px; }
.doors > legend { margin-left: -4px; }
.doors fieldset { display: grid; grid-template-columns: 108px 1fr; height: 44px; padding: 5px 0 0 22px; align-content: start; }
.doors fieldset legend { margin-left: -16px; }
.tabs { display: flex; align-items: flex-end; height: 20px; margin-top: 10px; }
.tabs button { height: 18px; padding: 0 3px; border: 1px solid; border-color: #fff #777 transparent #fff; border-right-width: 2px; border-bottom: 0; border-radius: 2px 2px 0 0; }
.tabs button[aria-selected] { height: 21px; padding: 0 6px 3px 7px; margin-bottom: -1px; background: #f0f0f0; }
.tabpanel { flex: 1; padding: 38px 144px 0 99px; border: 2px solid; border-color: #fff #777 #777 #fff; }
.sched { display: grid; grid-template-columns: 82px minmax(0, 1fr); gap: 7px; align-items: center; height: 20px; margin-bottom: 28px; }
.sched > label { text-align: right; white-space: nowrap; }
.time { display: flex; align-items: center; }
.time select { flex: none; width: 77px; margin-right: 11px; }
.time label { margin-right: 3px; }
.time input { flex: 1; width: 0; }
.actions { display: flex; justify-content: center; gap: 72px; margin-top: 13px; }
```
FILE: app.js
```js
// level, name, expander ("+", "-" or none)
const nodes = [
  [1, 'EffectShader'], [1, 'LandTexture', '+'], [1, 'LoadScreen', '+'], [1, 'Sound'], [1, 'SubSpace'], [1, 'WaterType'],
  [0, 'WorldObjects', '-'], [1, 'Activator', '-'], [2, 'Architecture', '+'], [2, 'Clutter', '+'], [2, 'Creatures', '+'],
  [2, 'Dungeons', '-'], [3, 'AyleidRuins', '-'], [4, 'Exterior'], [4, 'Interior', '-'], [5, 'Camera'], [5, 'Traps'], [5, 'Triggers'],
  [3, 'Caves', '-'], [4, 'Mines'], [4, 'Traps'], [4, 'Triggers'], [3, 'Chargen'], [3, 'FortRuins', '+'], [3, 'Misc', '+'], [3, 'Sewers'],
  [2, 'Fire'], [2, 'Furniture', '+'], [2, 'Landscape'], [2, 'Lights'], [2, 'Oblivion', '+'], [2, 'Plants'], [2, 'Rocks', '+'], [2, 'Sky'],
  [2, 'Weapons', '-'], [3, 'beeratwork', '-'], [4, 'djalrig', '+'],
  [1, 'Container', '+'], [1, 'Door', '+'], [1, 'Flora', '+'], [1, 'Furniture', '+'], [1, 'Grass', '+'], [1, 'Light', '+'], [1, 'Static', '+'], [1, 'Tree']
];
const continues = (i, level) => {
  for (let j = i + 1; j < nodes.length; j++) {
    if (nodes[j][0] < level) return false;
    if (nodes[j][0] === level) return true;
  }
  return false;
};
document.getElementById('tree').innerHTML = nodes.map(([level, name, box], i) => {
  let cells = '';
  for (let k = 0; k < level; k++) cells += `<i class="${continues(i, k) ? 'v' : ''}"></i>`;
  const mark = box ? `<span class="box ${box === '+' ? 'plus' : ''}"></span>` : '';
  cells += `<i class="h ${continues(i, level) ? 'v' : 'end'}">${mark}</i>`;
  const tag = level < 2 ? 'b' : 'span';
  return `<div class="node">${cells}<${tag}>${name}</${tag}></div>`;
}).join('');

const detail = {
  AARDjalrigPNJAdventurerOrc00: [12, 'Mashag Glorku', 'AARDjalrigPNJAdventurerOrc00Script', 10],
  Abhuki: [42, 'Abhuki', 'PublicanFaregylAbhuki', 20],
  AdamusPhillida: [17, 'Adamus Phillida', 'Dark09AdamusScript', 16],
  Adanrel: [2, 'Adanrel', '', 4],
  Amir: [7, 'Amir', '', 2],
  AmminusGregori: [41, 'Amminus Gregori', 'MS13AmminusScript', 11],
  Amusei: [58, 'Amusei', 'AmuseiScript', 1]
};
const ids = ('AARDjalrigPNJAdventurerOrc00 Abhuki AdamusPhillida Adanrel AdosiSerethi AdrianDecanius AdrienneBerene ' +
  'Adventurer Adventurer Adventurer Adventurer Adventurer Adventurer AelwinMerowald Aengvir Aenvir Agarmir Agata AgnartheLazy ' +
  'AgnetethePickled AgronakGroMalog Ahdarji AhMalz AjumKajin Alawen AlbericLitte AldosOthran AleronLoche AlessiaCaro AlessiaOttus ' +
  'Alga AlgottheNortherner AlixLencolia Alonzo AloysBincal AlvalUvani AlvesUvenim AmantiusAllectus AmbroiseCanne Amir AmminusGregori Amusei').split(' ');
document.querySelector('#npcs tbody').innerHTML = ids.map((id, i) => {
  const [users, name, script, level] = detail[id] || ['', '', '', ''];
  return `<tr><td><svg><use href="#npc"/></svg>${id}</td><td class="gap"></td><td>1${i ? '' : ' *'}</td><td>${users}</td><td>${name}</td><td>${script}</td><td>${level}</td></tr>`;
}).join('');
document.querySelector('#refs tbody').innerHTML = '<tr><td></td><td class="gap"></td><td></td><td></td><td></td><td class="gap"></td></tr>'.repeat(15);

const idField = document.getElementById('pid');
idField.focus();
idField.select();
```
